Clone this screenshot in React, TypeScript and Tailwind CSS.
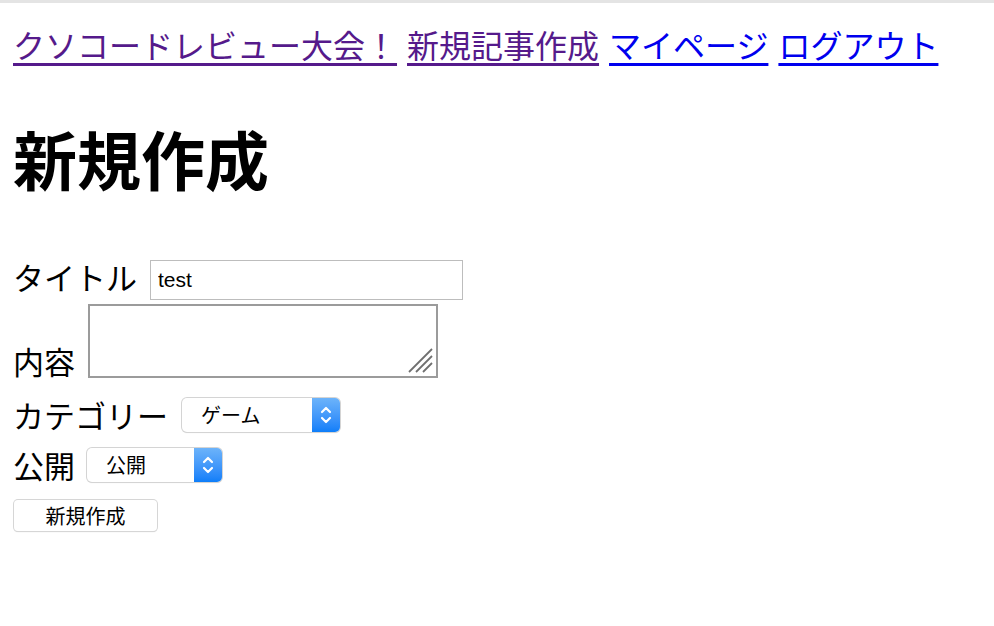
const font = "font-['Noto_Sans_CJK_JP','Noto_Sans_CJK_SC',sans-serif]";

function Chevrons() {
  return (
    <svg width="12" height="22" viewBox="0 0 12 22" fill="none" stroke="white" strokeWidth="2.2" strokeLinecap="round" strokeLinejoin="round">
      <path d="M2 8 L6 4 L10 8" />
      <path d="M2 14 L6 18 L10 14" />
    </svg>
  );
}

function MacSelect({ value, width }: { value: string; width: string }) {
  return (
    <div
      role="combobox"
      className={`flex h-[34px] ${width} items-center rounded-[5px] bg-white shadow-[0_0_0_1px_#d4d4d4,0_1px_1px_rgba(0,0,0,0.15)]`}
    >
      <span className="flex-1 pl-[19px] text-[20px] leading-[28px]">{value}</span>
      <div className="flex h-full w-[28px] items-center justify-center rounded-r-[5px] bg-gradient-to-b from-[#6cb3fa] to-[#0c7ef9]">
        <Chevrons />
      </div>
    </div>
  );
}

export default function App() {
  return (
    <div className={`min-h-[626px] bg-white text-black ${font}`}>
      <div className="h-[3px] bg-[#e4e4e4]" />
      <nav className="flex gap-[10px] px-[13px] pt-[21px] text-[32px] leading-[40px]">
        <a href="#" className="text-[#551a8b] underline underline-offset-[5px]">クソコードレビュー大会！</a>
        <a href="#" className="text-[#551a8b] underline underline-offset-[5px]">新規記事作成</a>
        <a href="#" className="text-[#0000ee] underline underline-offset-[5px]">マイページ</a>
        <a href="#" className="text-[#0000ee] underline underline-offset-[5px]">ログアウト</a>
      </nav>
      <h1 className="mt-[57px] px-[13px] text-[64px] font-bold leading-[72px]">新規作成</h1>
      <form className="mt-[67px] flex flex-col px-[13px] text-[31px] leading-[40px]">
        <div className="flex items-start gap-[13px]">
          <label className="leading-[34px]">タイトル</label>
          <input
            defaultValue="test"
            className="h-[40px] w-[313px] border border-[#bdbdbd] px-[7px] font-['Liberation_Sans',sans-serif] text-[21px] outline-none"
          />
        </div>
        <div className="mt-[4px] flex items-end gap-[13px]">
          <label className="leading-[34px]">内容</label>
          <div className="relative h-[74px] w-[350px] border-2 border-[#9b9b9b]">
            <textarea className="h-full w-full resize-none bg-transparent outline-none" />
            <svg className="pointer-events-none absolute bottom-[2px] right-[2px]" width="28" height="28" viewBox="0 0 28 28" stroke="#6f6f6f" strokeWidth="1.8">
              <path d="M3 26 L26 3" />
              <path d="M10 26 L26 10" />
              <path d="M17 26 L26 17" />
            </svg>
          </div>
        </div>
        <div className="mt-[17px] flex items-center gap-[14px]">
          <label>カテゴリー</label>
          <MacSelect value="ゲーム" width="w-[158px]" />
        </div>
        <div className="mt-[10px] flex items-center gap-[12px]">
          <label>公開</label>
          <MacSelect value="公開" width="w-[135px]" />
        </div>
        <div className="mt-[15px] flex">
          <button
            type="button"
            className="ml-[1px] h-[31px] w-[143px] rounded-[4px] bg-white text-[20px] leading-[28px] shadow-[0_0_0_1px_#d6d6d6,0_1px_1px_rgba(0,0,0,0.2)]"
          >
            新規作成
          </button>
        </div>
      </form>
    </div>
  );
}
